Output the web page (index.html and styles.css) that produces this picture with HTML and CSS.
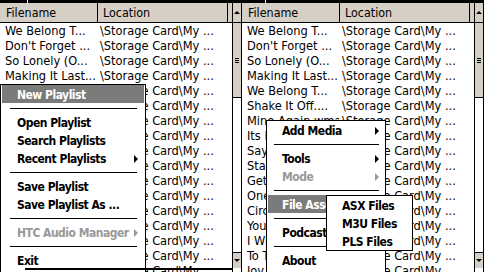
FILE: index.html
```html
<!DOCTYPE html>
<html>
<head>
<meta charset="utf-8">
<link rel="stylesheet" href="styles.css">
</head>
<body>
<div class="screen">
  <div class="panel">
    <div class="topbar"><span class="tick tick-l"></span></div>
    <div class="main">
      <div class="list">
        <div class="header">
          <div class="hcol c1">Filename</div>
          <div class="hcol c2">Location</div>
          <div class="hcol c3"></div>
        </div>
        <div class="rows">
          <div class="row"><span class="f">We Belong T...</span><span class="l">\Storage Card\My ...</span></div>
          <div class="row"><span class="f">Don't Forget ...</span><span class="l">\Storage Card\My ...</span></div>
          <div class="row"><span class="f">So Lonely (O...</span><span class="l">\Storage Card\My ...</span></div>
          <div class="row"><span class="f">Making It Last...</span><span class="l">\Storage Card\My ...</span></div>
          <div class="row"><span class="f">We Belong T...</span><span class="l">\Storage Card\My ...</span></div>
          <div class="row"><span class="f">Shake It Off....</span><span class="l">\Storage Card\My ...</span></div>
          <div class="row"><span class="f">Mine Again.wma</span><span class="l">\Storage Card\My ...</span></div>
          <div class="row"><span class="f">Its Late Now...</span><span class="l">\Storage Card\My ...</span></div>
          <div class="row"><span class="f">Say It Right...</span><span class="l">\Storage Card\My ...</span></div>
          <div class="row"><span class="f">Stay With Me...</span><span class="l">\Storage Card\My ...</span></div>
          <div class="row"><span class="f">Get Over It...</span><span class="l">\Storage Card\My ...</span></div>
          <div class="row"><span class="f">One More Ti...</span><span class="l">\Storage Card\My ...</span></div>
          <div class="row"><span class="f">Circle Of Li...</span><span class="l">\Storage Card\My ...</span></div>
          <div class="row"><span class="f">You Belong ...</span><span class="l">\Storage Card\My ...</span></div>
          <div class="row"><span class="f">I Will Alwa...</span><span class="l">\Storage Card\My ...</span></div>
          <div class="row"><span class="f">To The End...</span><span class="l">\Storage Card\My ...</span></div>
          <div class="row"><span class="f">Joy Ride.wma</span><span class="l">\Storage Card\My ...</span></div>
        </div>
      </div>
      <div class="scroll">
        <div class="sbtn up"><span class="tri-up"></span></div>
        <div class="thumb"><span class="grip"></span></div>
        <div class="track"></div>
        <div class="sbtn down"><span class="tri-down"></span></div>
        <div class="rest"></div>
      </div>
    </div>

    <div class="menu menu-left">
      <div class="item hl">New Playlist</div>
      <div class="sep"></div>
      <div class="item">Open Playlist</div>
      <div class="item">Search Playlists</div>
      <div class="item">Recent Playlists<span class="arrow"></span></div>
      <div class="sep"></div>
      <div class="item">Save Playlist</div>
      <div class="item">Save Playlist As ...</div>
      <div class="sep"></div>
      <div class="item dis">HTC Audio Manager<span class="arrow"></span></div>
      <div class="sep"></div>
      <div class="item">Exit</div>
    </div>
    <div class="baseline"></div>
  </div>

  <div class="panel">
    <div class="topbar"><span class="tick tick-r"></span></div>
    <div class="main">
      <div class="list">
        <div class="header">
          <div class="hcol c1">Filename</div>
          <div class="hcol c2">Location</div>
          <div class="hcol c3"></div>
        </div>
        <div class="rows">
          <div class="row"><span class="f">We Belong T...</span><span class="l">\Storage Card\My ...</span></div>
          <div class="row"><span class="f">Don't Forget ...</span><span class="l">\Storage Card\My ...</span></div>
          <div class="row"><span class="f">So Lonely (O...</span><span class="l">\Storage Card\My ...</span></div>
          <div class="row"><span class="f">Making It Last...</span><span class="l">\Storage Card\My ...</span></div>
          <div class="row"><span class="f">We Belong T...</span><span class="l">\Storage Card\My ...</span></div>
          <div class="row"><span class="f">Shake It Off....</span><span class="l">\Storage Card\My ...</span></div>
          <div class="row"><span class="f">Mine Again.wma</span><span class="l">\Storage Card\My ...</span></div>
          <div class="row"><span class="f">Its Late Now...</span><span class="l">\Storage Card\My ...</span></div>
          <div class="row"><span class="f">Say It Right...</span><span class="l">\Storage Card\My ...</span></div>
          <div class="row"><span class="f">Stay With Me...</span><span class="l">\Storage Card\My ...</span></div>
          <div class="row"><span class="f">Get Over It...</span><span class="l">\Storage Card\My ...</span></div>
          <div class="row"><span class="f">One More Ti...</span><span class="l">\Storage Card\My ...</span></div>
          <div class="row"><span class="f">Circle Of Li...</span><span class="l">\Storage Card\My ...</span></div>
          <div class="row"><span class="f">You Belong ...</span><span class="l">\Storage Card\My ...</span></div>
          <div class="row"><span class="f">I Will Alwa...</span><span class="l">\Storage Card\My ...</span></div>
          <div class="row"><span class="f">To The End...</span><span class="l">\Storage Card\My ...</span></div>
          <div class="row"><span class="f">Joy Ride.wma</span><span class="l">\Storage Card\My ...</span></div>
        </div>
      </div>
      <div class="scroll">
        <div class="sbtn up"><span class="tri-up"></span></div>
        <div class="thumb"><span class="grip"></span></div>
        <div class="track"></div>
        <div class="sbtn down"><span class="tri-down"></span></div>
        <div class="rest"></div>
      </div>
    </div>

    <div class="menu menu-right">
      <div class="item">Add Media<span class="arrow"></span></div>
      <div class="sep"></div>
      <div class="item">Tools<span class="arrow"></span></div>
      <div class="item dis">Mode<span class="arrow"></span></div>
      <div class="sep"></div>
      <div class="item hl">File Associations<span class="arrow"></span></div>
      <div class="sep"></div>
      <div class="item">Podcasts</div>
      <div class="sep"></div>
      <div class="item">About</div>
    </div>
    <div class="menu submenu">
      <div class="item">ASX Files</div>
      <div class="item">M3U Files</div>
      <div class="item">PLS Files</div>
    </div>
  </div>
</div>
</body>
</html>
```

FILE: styles.css
```css
* { box-sizing: border-box; }
html, body { margin: 0; padding: 0; background: #fff; }
body {
  font-family: "DejaVu Sans Condensed", "DejaVu Sans", sans-serif;
  font-stretch: semi-condensed;
  font-size: 12px;
  color: #000;
}
.screen {
  width: 484px;
  height: 272px;
  display: flex;
  overflow: hidden;
}
.panel {
  position: relative;
  width: 242px;
  height: 272px;
  display: flex;
  flex-direction: column;
  overflow: hidden;
}
.topbar {
  position: relative;
  height: 3px;
  background: #000;
  flex: none;
}
.tick {
  position: absolute;
  top: 0;
  width: 1px;
  height: 3px;
  background: #fff;
}
.tick-l { left: 27px; }
.tick-r { left: 23px; }
.main {
  flex: 1;
  display: flex;
  min-height: 0;
}
.list {
  width: 232px;
  display: flex;
  flex-direction: column;
}
.header {
  height: 20px;
  display: flex;
  background: #d6cfc5;
  border-bottom: 1px solid #000;
  flex: none;
  font-size: 12.4px;
}
.hcol {
  line-height: 19px;
  white-space: nowrap;
  border-right: 1px solid #000;
}
.c1 { width: 98px; padding-left: 6px; }
.c2 { width: 130px; padding-left: 5px; }
.c3 { flex: 1; border-right: none; }
.rows { flex: 1; overflow: hidden; font-size: 12.7px; }
.row {
  height: 15px;
  line-height: 15px;
  display: flex;
  white-space: nowrap;
}
.row .f { width: 97px; padding-left: 5px; overflow: hidden; }
.row .l { padding-left: 3px; }
.scroll {
  width: 10px;
  display: flex;
  flex-direction: column;
  border-left: 1px solid #000;
  border-right: 1px solid #000;
}
.sbtn {
  background: #d6cfc5;
  display: flex;
  align-items: center;
  justify-content: center;
  flex: none;
}
.up { height: 20px; border-bottom: 1px solid #000; }
.down { height: 16px; border-top: 1px solid #000; }
.thumb {
  height: 75px;
  background: #d6cfc5;
  border-bottom: 1px solid #000;
  display: flex;
  align-items: center;
  justify-content: center;
  flex: none;
}
.grip {
  width: 4px;
  height: 5px;
  background: linear-gradient(#000 0 1px, transparent 1px 2px, #000 2px 3px, transparent 3px 4px, #000 4px 5px);
}
.track { flex: 1; background: #fff; }
.rest { height: 4px; flex: none; }
.tri-up {
  width: 0; height: 0;
  border-left: 3px solid transparent;
  border-right: 3px solid transparent;
  border-bottom: 3px solid #000;
}
.tri-down {
  width: 0; height: 0;
  border-left: 3px solid transparent;
  border-right: 3px solid transparent;
  border-top: 3px solid #000;
}

/* menus */
.menu {
  position: absolute;
  background: #fff;
  border: 1px solid #000;
  font-weight: bold;
  letter-spacing: -0.5px;
}
.menu-left {
  left: 0;
  top: 84px;
  width: 146px;
  height: 200px;
}
.menu-right {
  left: 24px;
  top: 120px;
  width: 120px;
  height: 170px;
}
.submenu {
  left: 84px;
  top: 195px;
  width: 87px;
  height: 56px;
}
.item {
  height: 18px;
  line-height: 16px;
  padding-top: 2px;
  display: flex;
  align-items: center;
  padding-left: 16px;
  padding-right: 7px;
  white-space: nowrap;
  overflow: hidden;
}
.menu-right .item { padding-left: 15px; padding-right: 6px; }
.submenu .item { padding-left: 15px; }
.item.hl {
  background: #7b7b7b;
  color: #fff;
  margin: 0 1px;
  padding-left: 15px;
}
.menu-right .item.hl { padding-left: 14px; }
.item.dis { color: #999; }
.arrow {
  margin-left: auto;
  width: 0; height: 0;
  border-top: 4px solid transparent;
  border-bottom: 4px solid transparent;
  border-left: 4px solid #000;
  flex: none;
}
.item.dis .arrow { border-left-color: #999; }
.item.hl .arrow { border-left-color: #fff; }
.sep {
  height: 10px;
  display: flex;
  align-items: center;
  padding: 0 8px 0 9px;
}
.menu-right .sep { padding: 0 6px 0 7px; }
.sep::before {
  content: "";
  flex: 1;
  height: 1px;
  background: #000;
}
.baseline {
  position: absolute;
  left: 25px;
  top: 268px;
  width: 207px;
  height: 2px;
  background: #000;
}
```
